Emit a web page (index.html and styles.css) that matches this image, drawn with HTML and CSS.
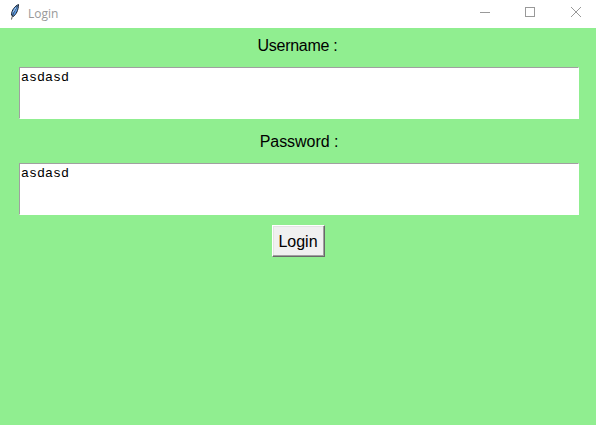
FILE: index.html
```html
<!DOCTYPE html>
<html lang="en">
<head>
<meta charset="utf-8">
<title>Login</title>
<link rel="stylesheet" href="styles.css">
</head>
<body>
<header class="titlebar">
  <svg class="feather" width="12" height="18" viewBox="0 0 12 18"><path d="M9.500 1.500C6 3 2.500 7 2.500 12L4 13.500C7 12 9.500 7 9.500 1.500Z" fill="#5b9be6" stroke="#1c2430"/><path d="M8.500 3C6 7 4 10 2.500 16.500" stroke="#222" stroke-width=".8" fill="none"/><path d="M7 4.500L4 9.500" stroke="#a8cdf5" fill="none"/></svg>
  <span class="title">Login</span>
  <div class="controls">
    <svg width="46" height="24" viewBox="0 0 46 24"><path d="M16 12.500h10"/></svg>
    <svg width="46" height="24" viewBox="0 0 46 24"><rect x="15.500" y="7.500" width="9" height="9"/></svg>
    <svg width="40" height="24" viewBox="0 0 40 24"><path d="M15 7l10 10M25 7l-10 10"/></svg>
  </div>
</header>
<main class="form">
  <label class="label username" for="user">Username :</label>
  <textarea class="field" id="user" spellcheck="false">asdasd</textarea>
  <label class="label" for="pass">Password :</label>
  <textarea class="field" id="pass" spellcheck="false">asdasd</textarea>
  <button class="login">Login</button>
</main>
</body>
</html>
```
FILE: styles.css
```css
* { box-sizing: border-box; }
body { margin: 0; height: 425px; overflow: hidden; background: #90ee90; }
.titlebar { height: 28px; background: #fff; display: flex; align-items: flex-start; padding-left: 9px; }
.feather { margin-top: 3px; }
.title { margin-left: 7px; font: 12px/27px "Open Sans", sans-serif; color: #999; }
.controls { margin-left: auto; display: flex; }
.controls svg { fill: none; stroke: #999; stroke-width: 1; }
.form { display: flex; flex-direction: column; align-items: center; padding: 0 17px 0 19px; }
.label { font: 16px/20px "Liberation Sans", sans-serif; color: #000; margin: 8px 0 11px; letter-spacing: -.05px; }
.username { letter-spacing: -.28px; margin-right: 3px; }
.field { width: 560px; height: 52px; resize: none; outline: 0; border: 1px solid; border-color: #a0a0a0 #fff #fff #a0a0a0; border-radius: 0; background: #fff; padding: 2px 1px; margin: 0 0 5px; color: #000; font: 13.333px/15px "Liberation Mono", monospace; overflow: hidden; }
.login { width: 53px; height: 32px; margin: 5px 2px 0 0; padding: 1px 0 0; border: 1px solid; border-color: #fff #696969 #696969 #fff; box-shadow: inset -1px -1px #a0a0a0, inset 1px 1px #e3e3e3; border-radius: 0; background: #f0f0f0; color: #000; font: 16px/20px "Liberation Sans", sans-serif; }
```
